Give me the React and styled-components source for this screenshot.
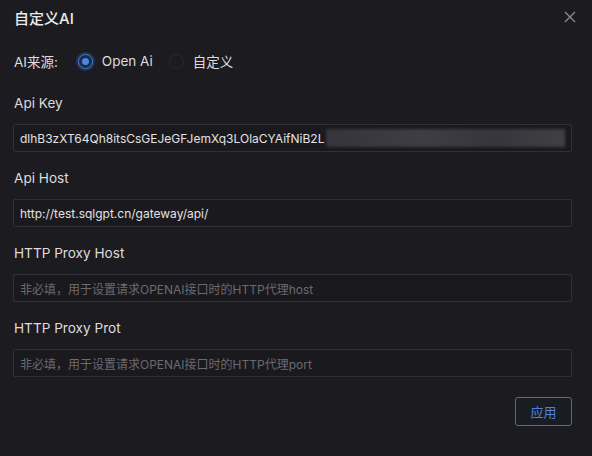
import React from "react";
import styled, { createGlobalStyle } from "styled-components";

const Global = createGlobalStyle`
  html, body {
    margin: 0;
    padding: 0;
    background: #1c1b20;
  }
  body {
    font-family: Inter, "Noto Sans CJK SC", "Noto Sans", sans-serif;
    color: #dcdcde;
  }
`;

const Dialog = styled.div`
  width: 592px;
  height: 456px;
  box-sizing: border-box;
  padding: 5px 20px 0 13px;
  background: #1c1b20;
  display: flex;
  flex-direction: column;
`;

const Header = styled.div`
  display: flex;
  align-items: center;
  justify-content: space-between;
  height: 24px;
  padding-left: 1px;
`;

const Title = styled.h1`
  margin: 0;
  font-size: 15px;
  font-weight: 500;
  color: #ececee;
`;

const Close = styled.button`
  border: none;
  background: none;
  padding: 0;
  margin-right: -6px;
  width: 16px;
  height: 16px;
  display: flex;
  align-items: center;
  justify-content: center;
  cursor: pointer;
`;

const RadioRow = styled.div`
  display: flex;
  align-items: center;
  height: 22px;
  margin-top: 21px;
  padding-left: 1px;
  font-size: 13.5px;
`;

const RowLabel = styled.span`
  color: #dcdcde;
  margin-right: 20px;
`;

const RadioItem = styled.label`
  display: flex;
  align-items: center;
  margin-right: 16px;
  color: #dcdcde;
`;

const Dot = styled.span`
  width: 15px;
  height: 15px;
  box-sizing: border-box;
  border-radius: 50%;
  margin-right: 9px;
  border: 1px solid ${(p) => (p.$on ? "#3d7ee0" : "#2a2a2f")};
  background: ${(p) => (p.$on ? "#1d2a44" : "transparent")};
  box-shadow: ${(p) => (p.$on ? "0 0 0 2px rgba(61,126,224,0.25)" : "none")};
  display: flex;
  align-items: center;
  justify-content: center;
  &::after {
    content: "";
    width: 7px;
    height: 7px;
    border-radius: 50%;
    background: ${(p) => (p.$on ? "#4a86e3" : "transparent")};
  }
`;

const Field = styled.div`
  display: flex;
  flex-direction: column;
  margin-top: ${(p) => (p.$first ? "20px" : "15px")};
`;

const FieldLabel = styled.div`
  font-size: 13.6px;
  line-height: 22px;
  height: 22px;
  padding-left: 1px;
  margin-bottom: 10px;
  color: #dcdcde;
`;

const InputBox = styled.div`
  height: 28px;
  box-sizing: border-box;
  border: 1px solid #303036;
  border-radius: 2px;
  background: #1a191e;
  display: flex;
  align-items: center;
  padding: 0 6px;
  font-size: 12px;
  color: ${(p) => (p.$placeholder ? "#6a6a70" : "#e2e2e4")};
  white-space: nowrap;
  overflow: hidden;
`;

const Blur = styled.span`
  flex: 1;
  height: 18px;
  margin-left: 2px;
  background: linear-gradient(90deg, #3a3a40, #45454b 40%, #3c3c42 70%, #47474c);
  filter: blur(1.5px);
  opacity: 0.85;
`;

const Footer = styled.div`
  display: flex;
  justify-content: flex-end;
  margin-top: 20px;
`;

const ApplyButton = styled.button`
  width: 57px;
  height: 29px;
  border: 1px solid #56698f;
  border-radius: 3px;
  background: #1a1c24;
  color: #4f82d8;
  font-size: 13px;
  font-family: inherit;
  cursor: pointer;
`;

const fields = [
  { label: "Api Key", value: "dlhB3zXT64Qh8itsCsGEJeGFJemXq3LOlaCYAifNiB2L", secret: true },
  { label: "Api Host", value: "http://test.sqlgpt.cn/gateway/api/" },
  { label: "HTTP Proxy Host", placeholder: "非必填，用于设置请求OPENAI接口时的HTTP代理host" },
  { label: "HTTP Proxy Prot", placeholder: "非必填，用于设置请求OPENAI接口时的HTTP代理port" },
];

export default function App() {
  return (
    <>
      <Global />
      <Dialog>
        <Header>
          <Title>自定义AI</Title>
          <Close aria-label="close">
            <svg width="12" height="12" viewBox="0 0 12 12">
              <path d="M1 1L11 11M11 1L1 11" stroke="#8c8c90" strokeWidth="1.3" />
            </svg>
          </Close>
        </Header>
        <RadioRow>
          <RowLabel>AI来源:</RowLabel>
          <RadioItem>
            <Dot $on />
            Open Ai
          </RadioItem>
          <RadioItem>
            <Dot />
            自定义
          </RadioItem>
        </RadioRow>
        {fields.map((f, i) => (
          <Field key={f.label} $first={i === 0}>
            <FieldLabel>{f.label}</FieldLabel>
            <InputBox $placeholder={!f.value}>
              {f.value || f.placeholder}
              {f.secret && <Blur />}
            </InputBox>
          </Field>
        ))}
        <Footer>
          <ApplyButton>应用</ApplyButton>
        </Footer>
      </Dialog>
    </>
  );
}
